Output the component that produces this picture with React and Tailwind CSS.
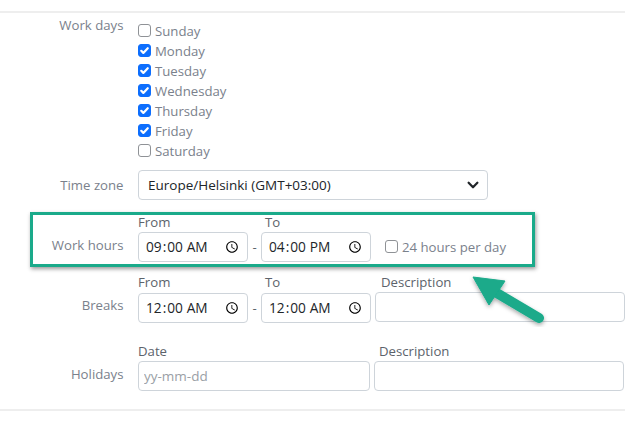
import React from "react";

function Day({ label, checked }) {
  return (
    <label className="flex items-center h-5 gap-1">
      <span className="relative w-[13px] h-[13px] -mt-[2px]">
        <input
          type="checkbox"
          defaultChecked={checked}
          className="peer block appearance-none w-[13px] h-[13px] rounded-[3px] border border-[#8f9296] bg-white checked:bg-[#0d6efd] checked:border-[#0d6efd]"
        />
        <svg viewBox="0 0 20 20" className="absolute inset-0 w-[13px] h-[13px] hidden peer-checked:block" fill="none" stroke="#fff" strokeWidth="3.4" strokeLinecap="round" strokeLinejoin="round">
          <path d="M5 10.5l3.2 3.2L15 6.5" />
        </svg>
      </span>
      <span className="text-[#7a818c]">{label}</span>
    </label>
  );
}

const fieldCls = "block h-[30px] rounded-[4px] border border-[#ced4da] bg-white text-[#212529] outline-none";

function Time({ value }) {
  return (
    <input
      type="time"
      defaultValue={value}
      className={`${fieldCls} w-[110px] pl-[6px] pr-[5px] text-[13.7px]`}
    />
  );
}

function Label({ children, className = "" }) {
  return <div className={`w-[123.5px] shrink-0 text-right text-[#7a818c] ${className}`}>{children}</div>;
}

function Cap({ children, className = "" }) {
  return <div className={`h-[20px] leading-[20px] text-[#5c636b] ${className}`}>{children}</div>;
}

export default function App() {
  return (
    <div className="relative w-[625px] h-[425px] overflow-hidden bg-white text-[13.2px] leading-5 font-['Open_Sans','Noto_Sans',sans-serif]">
      <div className="h-[13px] border-b-2 border-[#eeeeee]" />

      <div className="flex pt-[4px]">
        <Label className="-mt-[2px]">Work days</Label>
        <div className="ml-[14.5px] pt-[4px] flex flex-col">
          <Day label="Sunday" />
          <Day label="Monday" checked />
          <Day label="Tuesday" checked />
          <Day label="Wednesday" checked />
          <Day label="Thursday" checked />
          <Day label="Friday" checked />
          <Day label="Saturday" />
        </div>
      </div>

      <div className="flex items-center mt-[9px]">
        <Label>Time zone</Label>
        <div className="relative ml-[14.5px]">
          <select className={`${fieldCls} appearance-none w-[350px] pl-[9px] text-[13.5px]`} defaultValue="h">
            <option value="h">Europe/Helsinki (GMT+03:00)</option>
          </select>
          <svg viewBox="0 0 16 16" className="absolute right-[8px] top-[8px] w-[14px] h-[14px]" fill="none" stroke="#212529" strokeWidth="2.6" strokeLinecap="round" strokeLinejoin="round">
            <path d="M3 5.5l5 5 5-5" />
          </svg>
        </div>
      </div>

      <div className="mt-[12px] flex">
        <Label className="self-end h-[30px] leading-[26px]">Work hours</Label>
        <div className="ml-[14.5px]">
          <Cap>From</Cap>
          <Time value="09:00" />
        </div>
        <div className="self-end h-[30px] w-[13px] text-center leading-[30px] text-[#5c636b]">-</div>
        <div>
          <Cap className="pl-[4px]">To</Cap>
          <Time value="16:00" />
        </div>
        <label className="self-end h-[30px] ml-[14px] flex items-center gap-1">
          <span className="relative w-[13px] h-[13px] -mt-[2px]">
            <input type="checkbox" className="block appearance-none w-[13px] h-[13px] rounded-[3px] border border-[#8f9296] bg-white" />
          </span>
          <span className="text-[#7a818c]">24 hours per day</span>
        </label>
      </div>

      <div className="mt-[10px] flex">
        <Label className="self-end h-[30px] leading-[25px]">Breaks</Label>
        <div className="ml-[14.5px]">
          <Cap className="h-[21px]">From</Cap>
          <Time value="00:00" />
        </div>
        <div className="self-end h-[30px] w-[13px] text-center leading-[30px] text-[#5c636b]">-</div>
        <div>
          <Cap className="h-[21px] pl-[4px]">To</Cap>
          <Time value="00:00" />
        </div>
        <div className="ml-[4px]">
          <Cap className="pl-[6px]">Description</Cap>
          <input type="text" className={`${fieldCls} w-[250px]`} />
        </div>
      </div>

      <div className="mt-[18px] flex">
        <Label className="self-end h-[30px] leading-[26px]">Holidays</Label>
        <div className="ml-[14.5px]">
          <Cap>Date</Cap>
          <input type="text" placeholder="yy-mm-dd" className={`${fieldCls} w-[232px] px-[5px] text-[13.5px] placeholder:text-[#9aa0a6]`} />
        </div>
        <div className="ml-[4px]">
          <Cap className="pl-[5px]">Description</Cap>
          <input type="text" className={`${fieldCls} w-[250px]`} />
        </div>
      </div>

      <div className="mt-[18px] border-t-2 border-[#eeeeee]" />

      <div className="absolute left-[30px] top-[212px] w-[505px] h-[55px] border-[3px] border-[#1aaa8a] shadow-[1px_2px_4px_rgba(0,0,0,0.4)] pointer-events-none" />

      <svg className="absolute left-0 top-0 w-[625px] h-[425px] pointer-events-none" viewBox="0 0 625 425">
        <defs>
          <filter id="s" x="-20%" y="-20%" width="140%" height="140%">
            <feDropShadow dx="0" dy="2" stdDeviation="2" floodColor="#000" floodOpacity="0.35" />
          </filter>
        </defs>
        <g filter="url(#s)">
          <path d="M490 289L539 318" stroke="#1aaa8a" strokeWidth="10" strokeLinecap="round" fill="none" />
          <path d="M473 277L505 281L489 305Z" fill="#1aaa8a" stroke="#1aaa8a" strokeWidth="1" strokeLinejoin="round" />
        </g>
      </svg>
    </div>
  );
}
